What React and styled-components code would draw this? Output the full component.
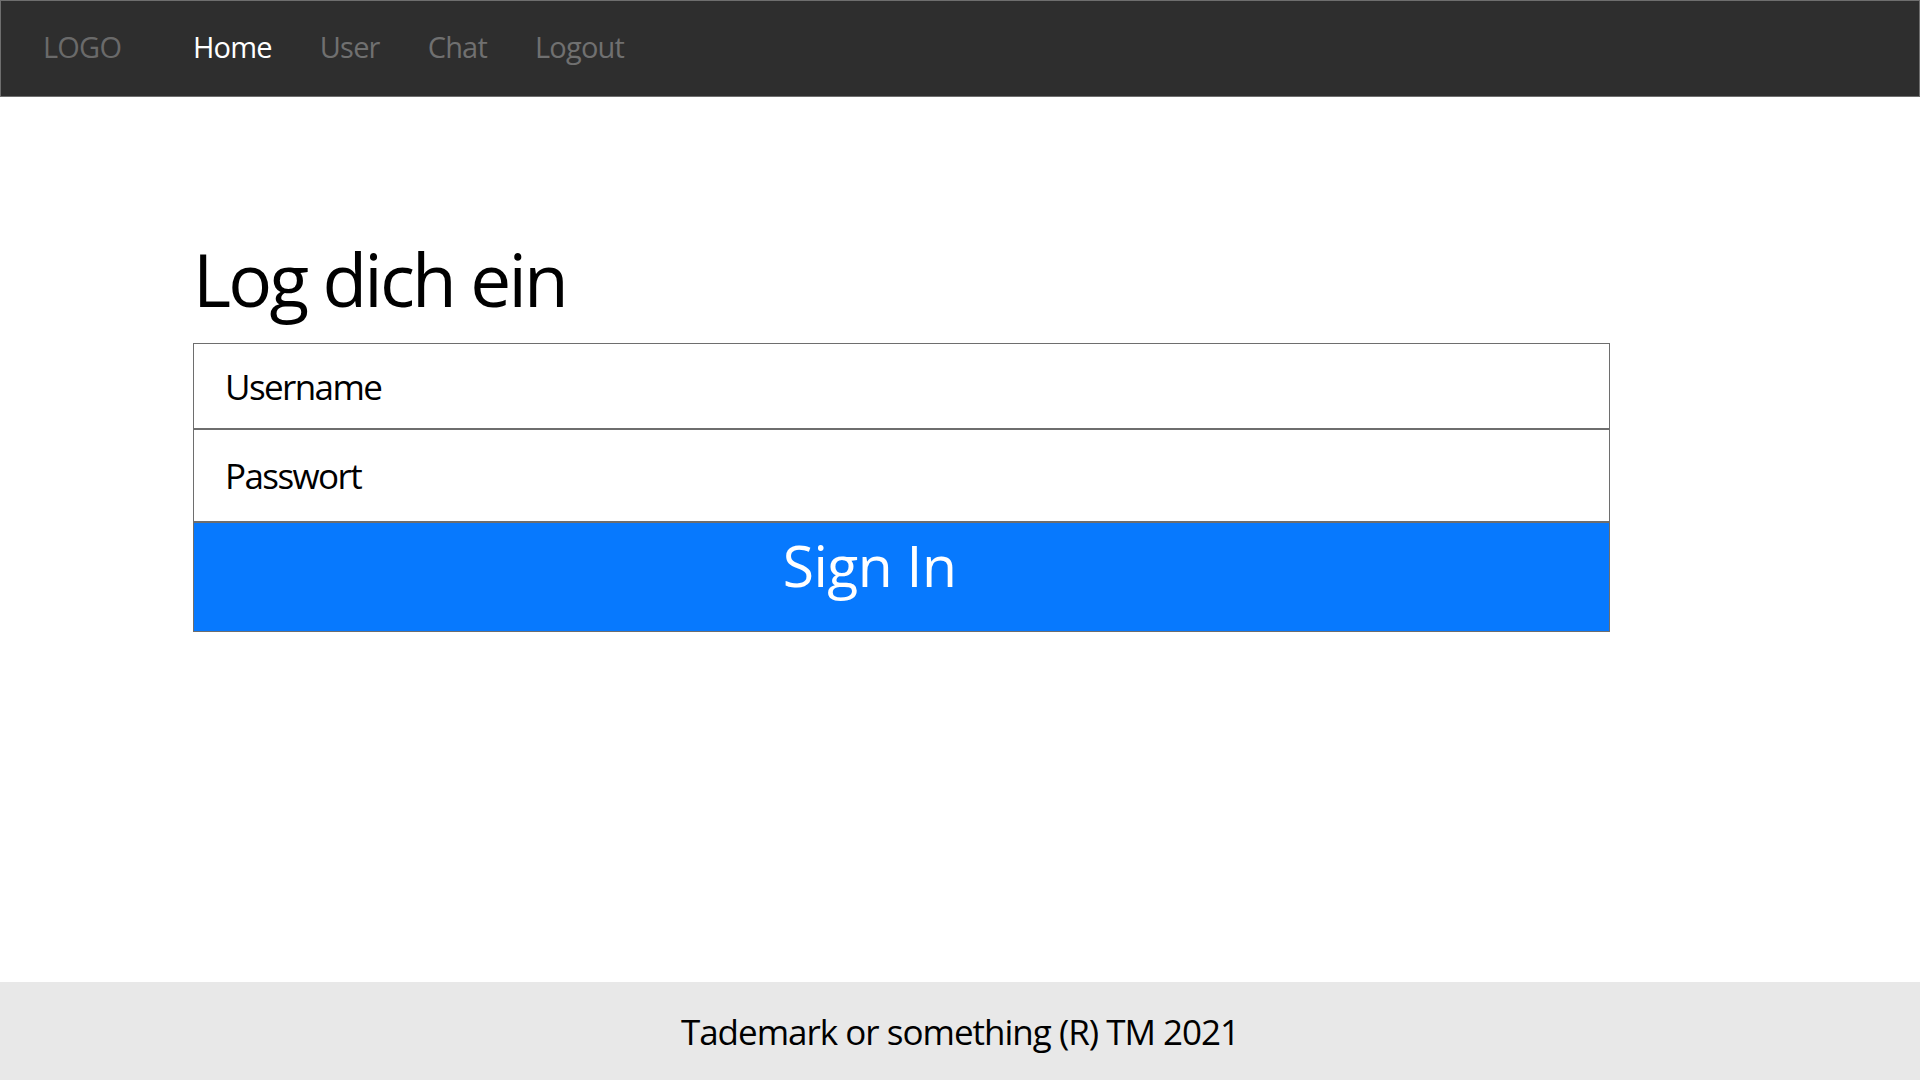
import React from "react";
import styled, { createGlobalStyle } from "styled-components";

const GlobalStyle = createGlobalStyle`
  html, body { margin: 0; padding: 0; background: #ffffff; }
  body { font-family: "Open Sans", "Noto Sans", sans-serif; }
  * { box-sizing: border-box; }
`;

const Page = styled.div`
  min-height: 100vh;
  display: flex;
  flex-direction: column;
`;

const NavBar = styled.nav`
  height: 97px;
  background: #2e2e2e;
  border: 1px solid #6e6e6e;
  display: flex;
  align-items: center;
  padding: 0 0 5px 42px;
`;

const Logo = styled.div`
  font-size: 29px;
  color: #6a6a6a;
  width: 150px;
  letter-spacing: -0.8px;
`;

const NavLinks = styled.ul`
  display: flex;
  gap: 48px;
  list-style: none;
  margin: 0;
  padding: 0;
`;

const NavLink = styled.li`
  font-size: 29px;
  color: ${(p) => (p.$active ? "#ffffff" : "#707070")};
  letter-spacing: -0.8px;
`;

const Main = styled.main`
  flex: 1;
  padding: 132px 0 0 193px;
`;

const Heading = styled.h1`
  margin: 0 0 14px 0;
  font-size: 73px;
  font-weight: 400;
  color: #000;
  line-height: 100px;
  letter-spacing: -2.8px;
`;

const Form = styled.form`
  width: 1417px;
  display: flex;
  flex-direction: column;
`;

const Field = styled.input`
  height: ${(p) => p.$h}px;
  border: 1px solid #6e6e6e;
  padding: 0 0 0 31px;
  font-family: "Open Sans", "Noto Sans", sans-serif;
  font-size: 35px;
  color: #000;
  background: #fff;
  outline: none;
  letter-spacing: -1.6px;
  &::placeholder { color: #000; opacity: 1; }
`;

const SubmitButton = styled.button`
  height: 110px;
  border: 1px solid #6e6e6e;
  background: #0779fe;
  color: #ffffff;
  font-family: "Open Sans", "Noto Sans", sans-serif;
  font-size: 57px;
  padding: 0 64px 24px 0;
  text-align: center;
  cursor: pointer;
  letter-spacing: -0.5px;
`;

const Footer = styled.footer`
  height: 98px;
  background: #e8e8e8;
  display: flex;
  align-items: center;
  justify-content: center;
  font-size: 35px;
  color: #000;
  letter-spacing: -1px;
`;

export default function App() {
  return (
    <>
      <GlobalStyle />
      <Page>
        <NavBar>
          <Logo>LOGO</Logo>
          <NavLinks>
            <NavLink $active>Home</NavLink>
            <NavLink>User</NavLink>
            <NavLink>Chat</NavLink>
            <NavLink>Logout</NavLink>
          </NavLinks>
        </NavBar>
        <Main>
          <Heading>Log dich ein</Heading>
          <Form onSubmit={(e) => e.preventDefault()}>
            <Field $h={86} type="text" placeholder="Username" />
            <Field $h={93} type="password" placeholder="Passwort" />
            <SubmitButton type="submit">Sign In</SubmitButton>
          </Form>
        </Main>
        <Footer>Tademark or something (R) TM 2021</Footer>
      </Page>
    </>
  );
}
